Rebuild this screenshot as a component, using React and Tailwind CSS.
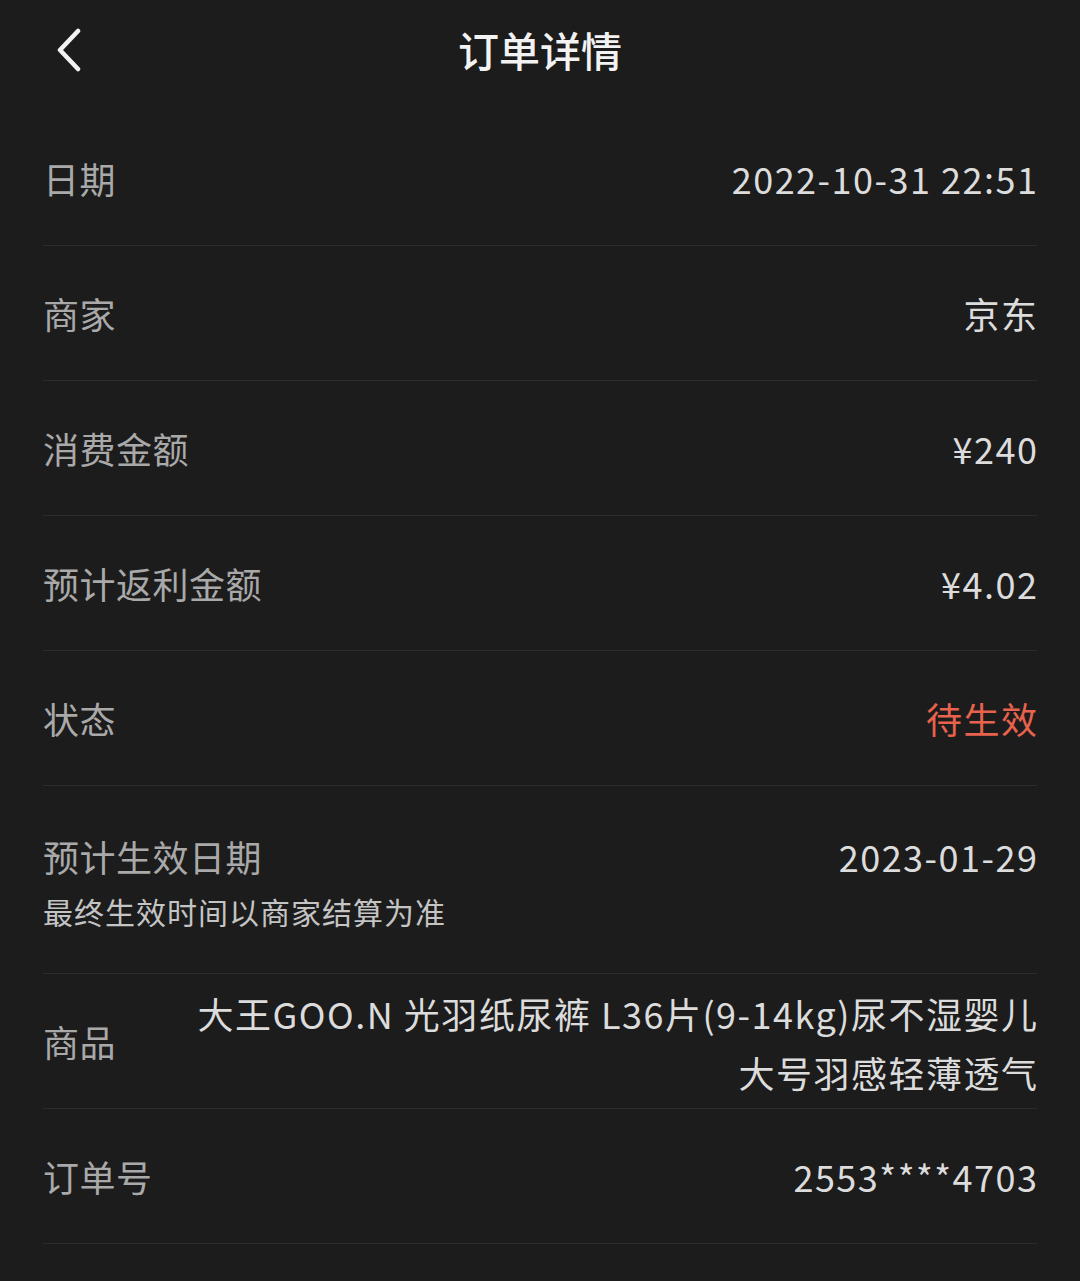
import React from 'react';

const rows = [
  { label: '日期', value: '2022-10-31 22:51' },
  { label: '商家', value: '京东' },
  { label: '消费金额', value: '¥240' },
  { label: '预计返利金额', value: '¥4.02' },
  { label: '状态', value: '待生效', accent: true },
];

const Row = ({ label, value, accent }) => (
  <div className="flex items-center justify-between h-[135px] border-b border-[#2c2c2c]">
    <span className="text-[36px] leading-[50px] tracking-[0.5px] text-[#a9a9a9]">{label}</span>
    <span className={`text-[36px] leading-[50px] tracking-[1.5px] -mr-[1.5px] ${accent ? 'text-[#e8624d]' : 'text-[#dcdcdc]'}`}>{value}</span>
  </div>
);

export default function App() {
  return (
    <div
      className="min-h-[1281px] bg-[#1c1c1c]"
      style={{ fontFamily: '"Noto Sans CJK SC", "Noto Sans", sans-serif' }}
    >
      {/* header */}
      <header className="relative h-[111px] flex justify-center pt-[24px]">
        <button className="absolute left-[55px] top-[28px] w-[28px] h-[44px] flex items-center justify-center">
          <svg width="26" height="44" viewBox="0 0 26 44" fill="none">
            <path d="M22 3 L4 22 L22 41" stroke="#f2f2f2" strokeWidth="4.5" strokeLinecap="round" strokeLinejoin="round" />
          </svg>
        </button>
        <h1 className="text-[41px] leading-[50px] font-medium text-[#f2f2f2]">订单详情</h1>
      </header>

      <div className="px-[43px]">
        {rows.map((r) => (
          <Row key={r.label} {...r} />
        ))}

        <div className="border-b border-[#2c2c2c] pt-[45px] pb-[42px]">
          <div className="flex items-center justify-between">
            <span className="text-[36px] leading-[50px] tracking-[0.5px] text-[#a9a9a9]">预计生效日期</span>
            <span className="text-[36px] leading-[50px] tracking-[1.5px] -mr-[1.5px] text-[#dcdcdc]">2023-01-29</span>
          </div>
          <p className="mt-[10px] text-[30px] leading-[40px] tracking-[1px] text-[#c4c4c4]">最终生效时间以商家结算为准</p>
        </div>

        <div className="flex items-center justify-between h-[135px] border-b border-[#2c2c2c]">
          <span className="text-[36px] leading-[50px] tracking-[0.5px] text-[#a9a9a9] shrink-0">商品</span>
          <span className="text-[36px] leading-[59px] tracking-[1.5px] -mr-[1.5px] text-[#dcdcdc] text-right pt-[4px]">
            大王GOO.N 光羽纸尿裤 L36片(9-14kg)尿不湿婴儿
            <br />
            大号羽感轻薄透气
          </span>
        </div>

        <Row label="订单号" value="2553****4703" />
      </div>
    </div>
  );
}
